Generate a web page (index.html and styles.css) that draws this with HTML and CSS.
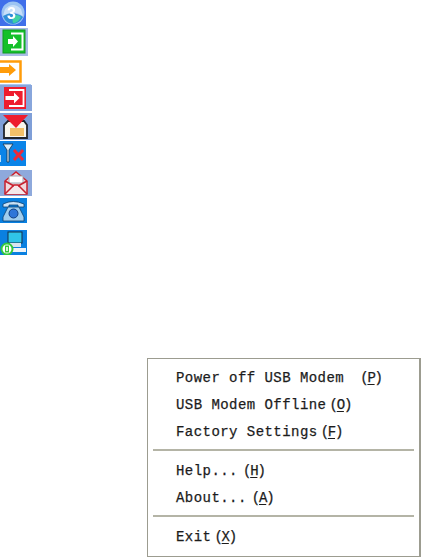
FILE: index.html
```html
<!DOCTYPE html>
<html lang="en">
<head>
  <meta charset="UTF-8" />
  <title>USB Modem tray icons</title>
  <link rel="stylesheet" href="styles.css">
</head>
<body>
  <!-- Tray icons -->
  <div class="icons">
    <svg class="ico" width="26" height="26" viewBox="0 0 26 26">
      <rect width="26" height="26" fill="#3f6fea"/>
      <circle cx="13" cy="13" r="11.500" fill="#9cc4f2"/>
      <path d="M5 9 Q13 1 21 9 L23 16 Q13 9 3 16Z" fill="#c6def8"/>
      <path d="M3 16 Q13 10 23 17 Q19 24 13 24 Q6 24 3 16Z" fill="#2f8fd8"/>
      <path d="M12 17 Q17 13 21 17 Q18 23 13 23Z" fill="#3fd0a4"/>
      <text class="ico-three" x="7" y="19">3</text>
    </svg>
    <svg class="ico gap2" width="28" height="28" viewBox="0 0 28 28">
      <rect width="28" height="28" fill="#a9bce6"/>
      <rect x="3" y="2" width="22" height="23" fill="#14c02a" stroke="#0f9a20"/>
      <path d="M11 5.500H22.500V21.500H11" fill="none" stroke="#fff" stroke-width="2"/>
      <path d="M8 11H13V8L18 13.500L13 19V16H8Z" fill="#fff"/>
    </svg>
    <svg class="ico gap4" width="32" height="25" viewBox="0 0 32 25">
      <rect width="32" height="24" fill="#fff"/>
      <rect y="24" width="31" height="1" fill="#a9c8f2"/>
      <path d="M0 1.500H20.500V21.500H0" fill="none" stroke="#ff9c0a" stroke-width="2.500"/>
      <path d="M0 7H9V4L16 10L9 16V13H0Z" fill="#ff9c0a"/>
    </svg>
    <svg class="ico" width="32" height="26" viewBox="0 0 32 26">
      <rect width="32" height="26" fill="#88a6dc"/>
      <rect x="4" y="2" width="22" height="22" fill="#ee1c2e"/>
      <path d="M9 5H23.500V21H9" fill="none" stroke="#fff" stroke-width="1.800"/>
      <path d="M5.500 11H14V7.500L19.500 13L14 18.500V15H5.500Z" fill="#fff"/>
    </svg>
    <svg class="ico gap2" width="32" height="27" viewBox="0 0 32 27">
      <rect width="32" height="27" fill="#7f9fd8"/>
      <path d="M4 25V12L8 8H24L27 12V25Z" fill="#f8f6ee" stroke="#20242c" stroke-width="1.800"/>
      <rect x="10" y="15" width="14" height="8" fill="#f2c069"/>
      <path d="M3 2H28L16 15Z" fill="#ee1c2e"/>
    </svg>
    <svg class="ico gap1" width="26" height="25" viewBox="0 0 26 25">
      <rect width="26" height="25" fill="#0a84e8"/>
      <path d="M3 3H13L9 9V21H7V9Z" fill="#d8ecfa" stroke="#16324a" stroke-width=".8"/>
      <path d="M14 9L23 19M23 9L14 19" stroke="#ee2a3a" stroke-width="3"/>
      <rect y="14" width="1" height="7" fill="#bfe0f7"/>
    </svg>
    <svg class="ico gap4" width="32" height="26" viewBox="0 0 32 26">
      <rect width="32" height="26" fill="#8ea9dc"/>
      <path d="M5 24V11L16 2L27 11V24Z" fill="#f0d8dc" stroke="#c8202e" stroke-width="1.500"/>
      <rect x="9" y="6" width="14" height="7" fill="#fff" stroke="#a0a8b4"/>
      <path d="M5 24L14 15H18L27 24" fill="#f6e8ea" stroke="#c8202e" stroke-width="1.500"/>
      <path d="M5 11L14 16M27 11L18 16" stroke="#c8202e" stroke-width="1.500"/>
    </svg>
    <svg class="ico gap2" width="27" height="25" viewBox="0 0 27 25">
      <rect width="27" height="25" fill="#0a80e0"/>
      <path d="M3 9V6Q13 1 24 6V9H18V7H9V9Z" fill="#c8e2f6" stroke="#0c3f70" stroke-width=".8"/>
      <path d="M8 9H19L24 19V23H3V19Z" fill="#9fcdee" stroke="#0c3f70" stroke-width=".8"/>
      <circle cx="13.500" cy="15.500" r="4.500" fill="#2f76d8" stroke="#123f80"/>
    </svg>
    <svg class="ico gap7" width="27" height="25" viewBox="0 0 27 25">
      <rect width="27" height="25" fill="#0a80e0"/>
      <rect x="8" y="2" width="14" height="11" fill="#30c4e8" stroke="#143048"/>
      <rect x="10" y="13" width="11" height="4" fill="#d8e4f0"/>
      <rect x="12" y="18" width="14" height="4" fill="#f0f4f8"/>
      <circle cx="7" cy="19" r="5.500" fill="#fff" stroke="#34c83c" stroke-width="2"/>
      <rect x="5" y="15.500" width="4" height="7" fill="#34c83c"/>
      <rect x="6.200" y="17" width="1.600" height="4" fill="#fff"/>
    </svg>
  </div>

  <!-- Right click menu -->
  <div class="menu">
    <div class="item">Power off USB Modem<span class="key far">(<u>P</u>)</span></div>
    <div class="item">USB Modem Offline<span class="key">(<u>O</u>)</span></div>
    <div class="item">Factory Settings<span class="key">(<u>F</u>)</span></div>
    <div class="sep"></div>
    <div class="item">Help...<span class="key wide">(<u>H</u>)</span></div>
    <div class="item">About...<span class="key wide">(<u>A</u>)</span></div>
    <div class="sep"></div>
    <div class="item">Exit<span class="key">(<u>X</u>)</span></div>
  </div>
</body>
</html>
```

FILE: styles.css
```css
* { margin: 0; padding: 0; box-sizing: border-box; }
body {
  background: #fff;
  font-family: "Liberation Mono", monospace;
  color: #1c1c1c;
  width: 421px;
  height: 557px;
  overflow: hidden;
}
.icons {
  display: flex;
  flex-direction: column;
  align-items: flex-start;
  height: 358px;
}
.ico { display: block; flex: none; filter: blur(0.4px); }
.gap1 { margin-top: 1px; }
.gap2 { margin-top: 2px; }
.gap4 { margin-top: 4px; }
.gap7 { margin-top: 7px; }
.ico-three {
  font-family: "Liberation Sans", sans-serif;
  font-size: 16px;
  font-weight: bold;
  fill: #fff;
}
.menu {
  margin-left: 147px;
  width: 274px;
  height: 199px;
  border: 1px solid #9c9c90;
  border-right-width: 2px;
  background: #fff;
  padding-top: 6px;
}
.item {
  height: 27px;
  line-height: 27px;
  padding-left: 28px;
  font-size: 14px;
  letter-spacing: 0.45px;
  white-space: pre;
  -webkit-text-stroke: 0.25px #1c1c1c;
}
.key { letter-spacing: -1.2px; margin-left: 3px; }
.wide { margin-left: 5px; }
.far { margin-left: 16px; }
.key u { text-underline-offset: 2px; }
.sep {
  height: 2px;
  margin: 3px 5px 7px;
  background: #b4b4a6;
}
```
